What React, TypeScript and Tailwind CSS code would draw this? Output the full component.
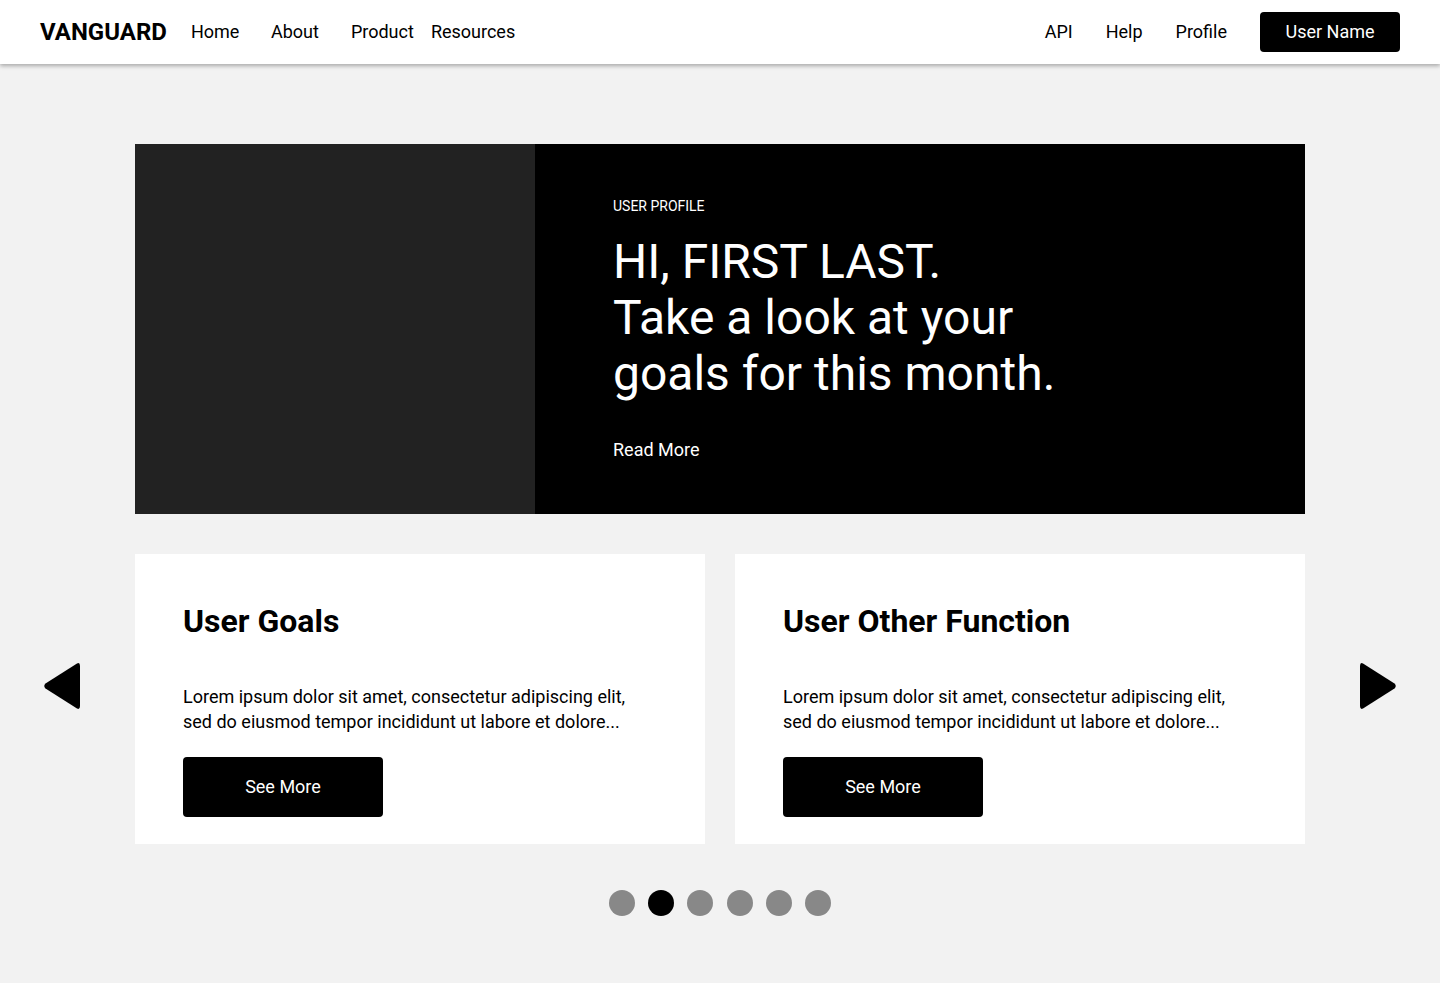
const cards = [
  { title: "User Goals" },
  { title: "User Other Function" },
]

const Triangle = ({ dir }: { dir: "left" | "right" }) => (
  <svg width="36" height="48" viewBox="0 0 36 48" aria-hidden="true" className="mt-[108px] self-start">
    {dir === "left" ? (
      <path
        d="M33 1.5 Q36 0 36 4 L36 44 Q36 48 33 46.5 L1.5 26.5 Q-1 24 1.5 21.5 Z"
        fill="#000"
      />
    ) : (
      <path
        d="M3 1.5 Q0 0 0 4 L0 44 Q0 48 3 46.5 L34.5 26.5 Q37 24 34.5 21.5 Z"
        fill="#000"
      />
    )}
  </svg>
)

export default function App() {
  return (
    <div
      className="min-h-[983px] bg-[#f2f2f2] text-black"
      style={{ fontFamily: "Roboto, 'Liberation Sans', sans-serif" }}
    >
      <header className="relative z-10 flex h-16 items-center justify-between bg-white px-10 shadow-[0_2px_4px_rgba(0,0,0,0.3)]">
        <div className="flex items-center">
          <span className="mr-6 text-2xl font-bold">VANGUARD</span>
          <nav className="flex text-lg">
            {["Home", "About", "Product", "Resources"].map((item) => (
              <a key={item} href="#" className="w-20">
                {item}
              </a>
            ))}
          </nav>
        </div>
        <div className="flex items-center gap-[33px] text-lg">
          <a href="#">API</a>
          <a href="#">Help</a>
          <a href="#">Profile</a>
          <button className="h-10 w-[140px] rounded bg-black text-white">
            User Name
          </button>
        </div>
      </header>

      <main className="pt-20">
        <section className="mx-auto flex h-[370px] w-[1170px]">
          <div className="w-[400px] bg-[#222222]" />
          <div className="flex flex-1 flex-col bg-black pl-[78px] pt-[54px] text-white">
            <p className="text-sm leading-4">USER PROFILE</p>
            <h1 className="mt-5 text-5xl leading-[56px]">
              HI, FIRST LAST.
              <br />
              Take a look at your
              <br />
              goals for this month.
            </h1>
            <a href="#" className="mt-[34px] text-lg">
              Read More
            </a>
          </div>
        </section>

        <section className="mt-10 flex justify-between px-11">
          <Triangle dir="left" />
          <div className="flex gap-[30px]">
            {cards.map((card) => (
              <div key={card.title} className="h-[290px] w-[570px] bg-white px-12 pt-[47px]">
                <h2 className="text-[32px] font-bold leading-10">{card.title}</h2>
                <p className="mt-[43px] text-lg leading-[25px]">
                  Lorem ipsum dolor sit amet, consectetur adipiscing elit,
                  <br />
                  sed do eiusmod tempor incididunt ut labore et dolore...
                </p>
                <button className="mt-[23px] h-[60px] w-[200px] rounded bg-black text-lg text-white">
                  See More
                </button>
              </div>
            ))}
          </div>
          <Triangle dir="right" />
        </section>

        <div className="mt-[46px] flex justify-center gap-[13.4px]">
          {[0, 1, 2, 3, 4, 5].map((i) => (
            <span
              key={i}
              className={`size-[26px] rounded-full ${i === 1 ? "bg-black" : "bg-[#888888]"}`}
            />
          ))}
        </div>
      </main>
    </div>
  )
}
